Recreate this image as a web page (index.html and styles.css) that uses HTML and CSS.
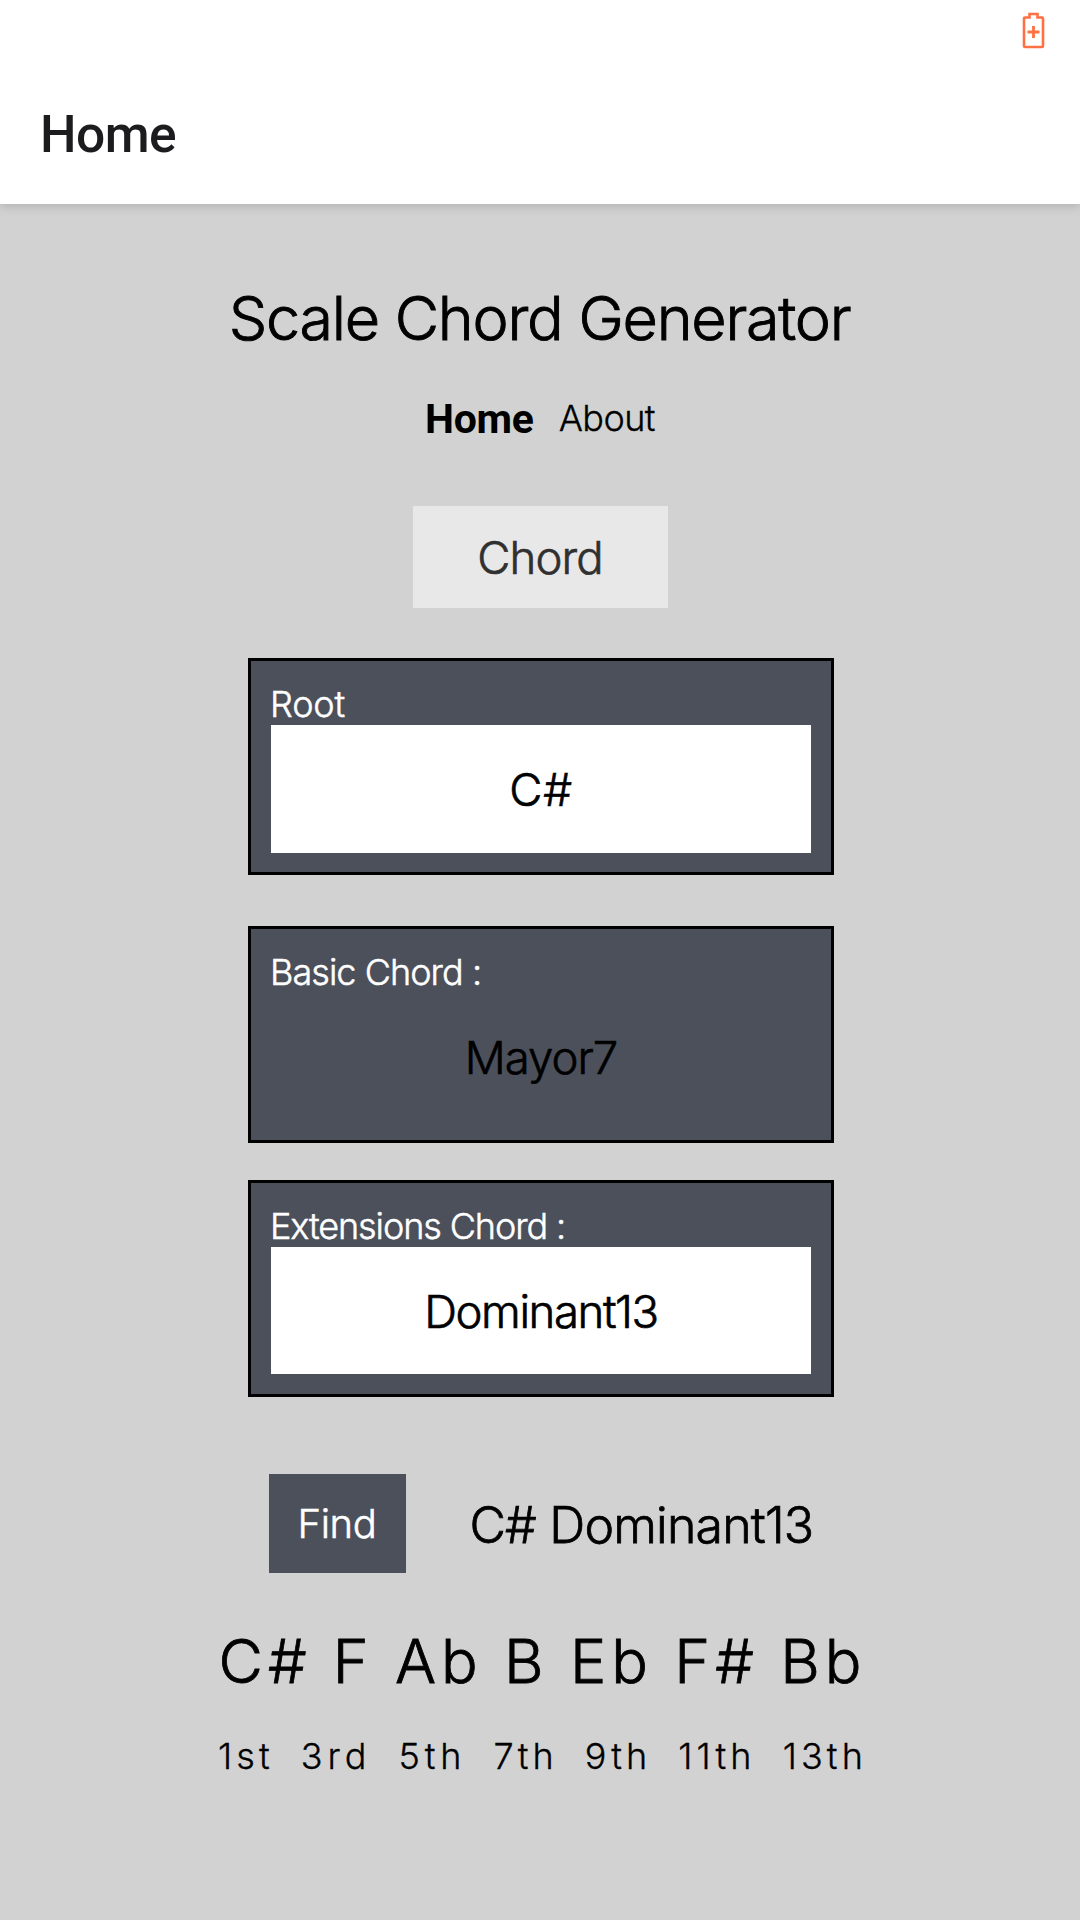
FILE: index.html
```html
<!DOCTYPE html>
<html lang="en">
<head>
<meta charset="utf-8">
<title>Scale Chord Generator</title>
<link rel="stylesheet" href="styles.css">
</head>
<body>
<header class="appbar">
  <div class="status">
    <svg class="battery" width="24" height="38" viewBox="0 0 24 38" fill="none" stroke="#ff7043">
      <path d="M3 6.500H7.500V3H15.500V6.500H20Q21 6.500 21 7.500V35Q21 36 20 36H3Q2 36 2 35V7.500Q2 6.500 3 6.500Z" stroke-width="2.600"/>
      <path d="M11.500 15V27M5.500 21H17.500" stroke-width="2.800"/>
    </svg>
  </div>
  <div class="toolbar">Home</div>
</header>
<main class="page">
  <h1 class="title">Scale Chord Generator</h1>
  <nav class="nav"><a class="nav-active">Home</a><a class="nav-link">About</a></nav>
  <button class="mode">Chord</button>
  <section class="card">
    <div class="label label-root">Root</div>
    <div class="value value-note">C#</div>
  </section>
  <section class="card card-basic">
    <div class="label label-basic">Basic Chord :</div>
    <div class="value value-basic">Mayor7</div>
  </section>
  <section class="card card-ext">
    <div class="label label-ext">Extensions Chord :</div>
    <div class="value value-ext">Dominant13</div>
  </section>
  <div class="result"><button class="find">Find</button><span class="name">C# Dominant13</span></div>
  <div class="notes"><span>C#</span><span>F</span><span>Ab</span><span>B</span><span>Eb</span><span>F#</span><span>Bb</span></div>
  <div class="degrees"><span>1st</span><span class="wide">3rd</span><span class="wide">5th</span><span>7th</span><span>9th</span><span>11th</span><span>13th</span></div>
</main>
</body>
</html>
```
FILE: styles.css
```css
* { box-sizing: border-box; }
body { margin: 0; width: 1080px; height: 1920px; overflow: hidden; background: #d2d2d2; color: #000; font-family: Inter, sans-serif; font-weight: 300; -webkit-text-stroke: .55px currentColor; }
button { border: 0; padding: 0; font: inherit; }
.appbar { position: relative; height: 204px; background: #fff; box-shadow: 0 2px 10px rgba(0, 0, 0, .17); -webkit-text-stroke: 0; }
.status { height: 64px; display: flex; justify-content: flex-end; padding: 11px 34px 0 0; }
.toolbar { height: 140px; padding-left: 40px; font: 500 51.5px/142px Roboto, sans-serif; letter-spacing: -.5px; color: #1c1c1e; }
.page { display: flex; flex-direction: column; align-items: center; padding-top: 74px; }
.title { margin: 0 1px 0 0; font-size: 61px; line-height: 80px; font-weight: 300; letter-spacing: -1.25px; white-space: nowrap; -webkit-text-stroke-width: .9px; }
.nav { display: flex; align-items: flex-start; gap: 25px; margin-top: 31px; height: 60px; }
.nav-active { font: 700 41px/60px Roboto, sans-serif; letter-spacing: -.3px; -webkit-text-stroke: 0; }
.nav-link { font-size: 36px; line-height: 59px; letter-spacing: -.6px; -webkit-text-stroke-width: .3px; }
.mode { margin-top: 57px; width: 255px; height: 102px; background: #e8e8e8; color: #303030; font-size: 45.5px; letter-spacing: -.87px; -webkit-text-stroke: .65px #303030; }
.card { width: 586px; height: 217px; margin: 50px 0 0 2px; padding: 22px 20px 0; border: 3px solid #000; background: #4c505b; }
.card-basic { margin-top: 51px; }
.card-ext { margin-top: 37px; }
.label { height: 42px; margin-left: -1px; color: #fff; font-size: 36px; line-height: 42px; white-space: nowrap; -webkit-text-stroke: .5px #fff; }
.label-root { letter-spacing: -.2px; }
.label-basic { letter-spacing: -.95px; }
.label-ext { letter-spacing: -1.1px; }
.value { height: 128px; background: #fff; font-size: 45.5px; line-height: 130px; text-align: center; -webkit-text-stroke-width: .65px; }
.value-note { letter-spacing: .87px; }
.value-basic { background: none; letter-spacing: -1px; }
.value-ext { height: 127px; letter-spacing: -1.4px; }
.result { display: flex; align-items: center; width: 543px; height: 99px; margin-top: 77px; }
.find { flex: none; width: 137px; height: 99px; background: #4c505b; color: #fff; font-size: 40px; letter-spacing: -.4px; -webkit-text-stroke: .55px #fff; }
.name { flex: none; margin-left: 64px; font-size: 50px; line-height: 62px; letter-spacing: -.8px; white-space: nowrap; padding-top: 3px; -webkit-text-stroke-width: .75px; }
.notes { display: flex; justify-content: space-between; width: 648px; height: 80px; margin: 48px 0 0 5px; font-size: 61px; line-height: 80px; letter-spacing: 5px; -webkit-text-stroke-width: .8px; }
.degrees { display: flex; justify-content: space-between; width: 649px; height: 50px; margin: 30px 0 0 5px; font-size: 36px; line-height: 50px; letter-spacing: 4.1px; -webkit-text-stroke-width: .3px; }
.wide { letter-spacing: 4.9px; }
```
